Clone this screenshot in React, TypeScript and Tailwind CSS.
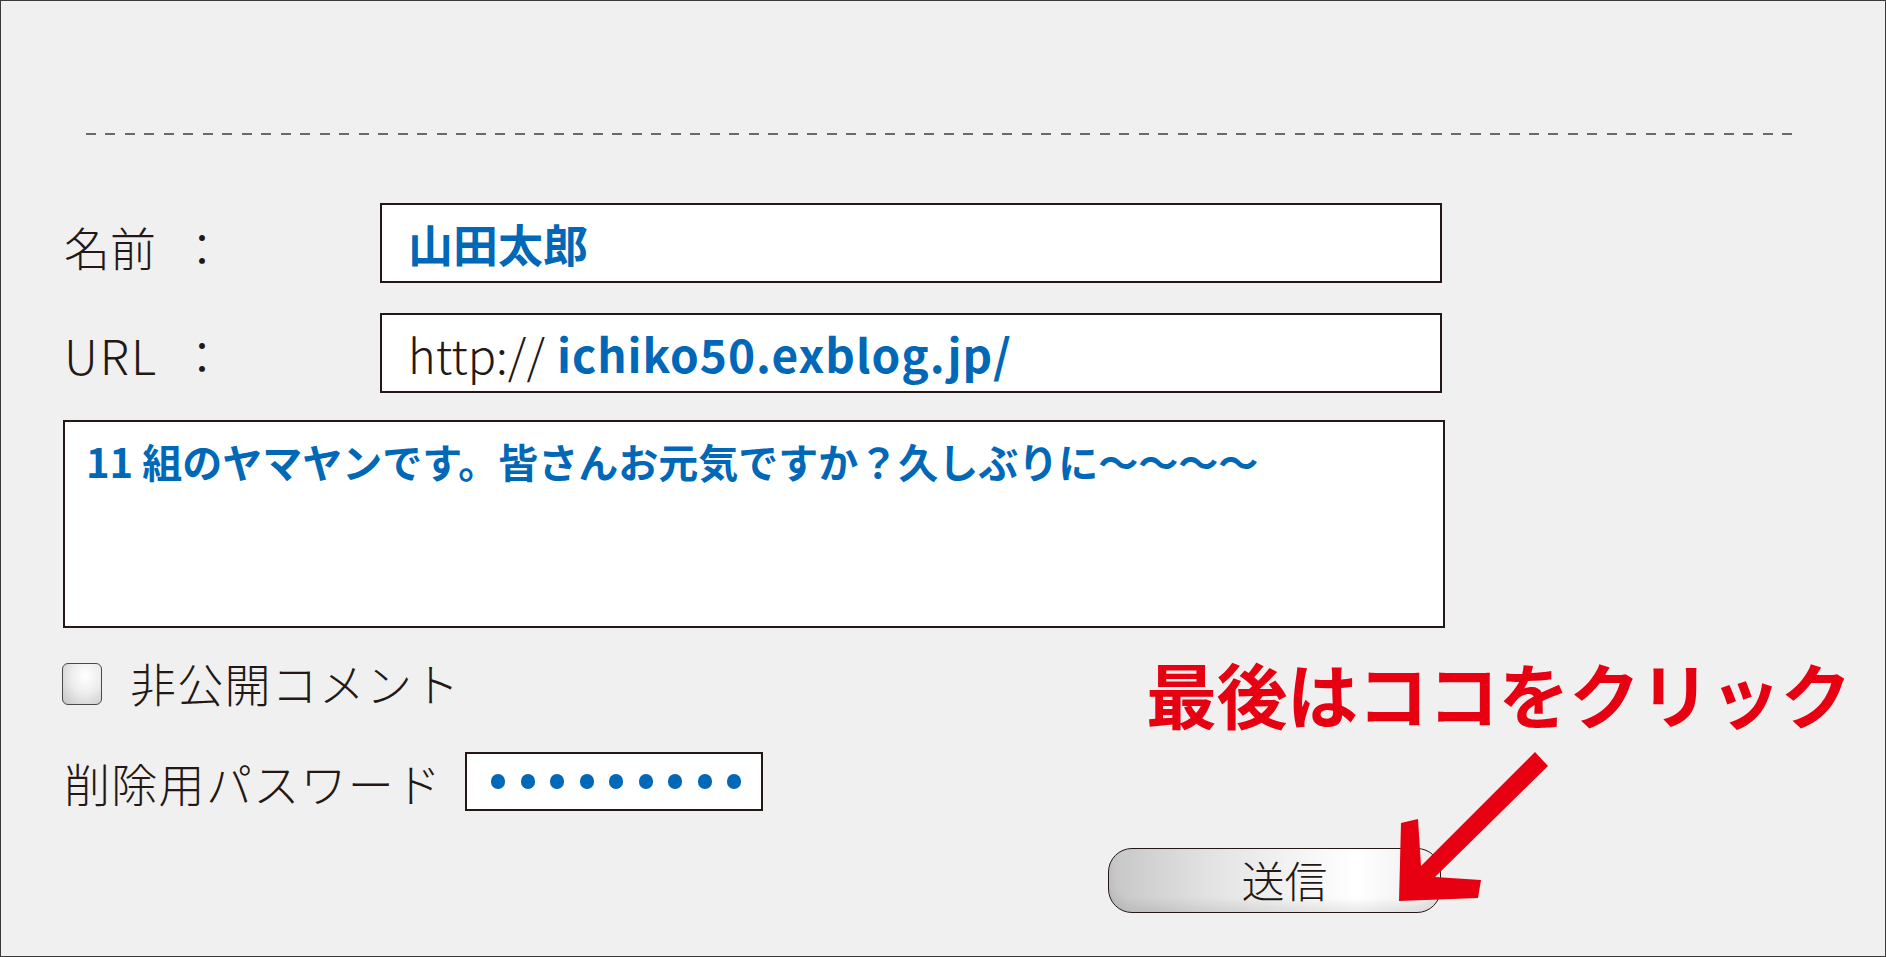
import React from "react";

export default function App() {
  const dots = [0, 1, 2, 3, 4, 5, 6, 7, 8];
  return (
    <div className="relative h-[957px] w-[1886px] overflow-hidden border border-[#3a3a3a] bg-[#f0f0f0] font-['Noto_Sans_CJK_JP','Noto_Sans',sans-serif] text-[#231815]">
      <div className="ml-[85px] mt-[132px] h-[2px] w-[1716px] bg-[repeating-linear-gradient(to_right,#6a6a6a_0px,#6a6a6a_10px,transparent_10px,transparent_19.5px)]" />

      {/* name row */}
      <div className="mt-[68px] flex items-center pl-[63px]">
        <span className="mt-[6px] w-[115px] text-[46px] font-light leading-none">名前</span>
        <span className="mt-[6px] w-[46px] text-center text-[46px] font-light leading-none">：</span>
        <div className="ml-[155px] flex h-[80px] w-[1062px] items-center border-2 border-[#231815] bg-white pl-[26px]">
          <span className="text-[45px] font-bold leading-none text-[#0068b7]">山田太郎</span>
        </div>
      </div>

      {/* url row */}
      <div className="mt-[30px] flex items-center pl-[63px]">
        <span className="mt-[2px] w-[115px] text-[48px] font-light leading-none tracking-[2px]">URL</span>
        <span className="mt-[2px] w-[46px] text-center text-[46px] font-light leading-none">：</span>
        <div className="ml-[155px] flex h-[80px] w-[1062px] items-center border-2 border-[#231815] bg-white pl-[26px]">
          <span className="text-[47px] font-light leading-none">http://</span>
          <span className="ml-[12px] text-[46px] font-bold leading-none tracking-[1px] text-[#0068b7]">ichiko50.exblog.jp/</span>
        </div>
      </div>

      {/* textarea */}
      <div className="ml-[62px] mt-[27px] h-[208px] w-[1382px] border-2 border-[#231815] bg-white pl-[21px] pt-[19px]">
        <p className="text-[40px] font-bold leading-none text-[#0068b7]">
          11 組のヤマヤンです。皆さんお元気ですか？久しぶりに〜〜〜〜
        </p>
      </div>

      {/* private comment */}
      <div className="mt-[35px] flex items-center pl-[61px]">
        <div className="h-[42px] w-[40px] rounded-[6px] border-[1.5px] border-[#4a4a4a] bg-[radial-gradient(ellipse_at_60%_30%,#ffffff_0%,#ededed_45%,#c4c4c4_100%)]" />
        <span className="-mt-[4px] ml-[28px] text-[46px] font-light leading-none tracking-[1.2px]">非公開コメント</span>
      </div>

      {/* password */}
      <div className="mt-[47px] flex items-center pl-[63px]">
        <span className="w-[401px] text-[46px] font-light leading-none tracking-[1.3px]">削除用パスワード</span>
        <div className="flex h-[59px] w-[298px] items-center gap-[15.5px] border-2 border-[#231815] bg-white pl-[24px]">
          {dots.map((d) => (
            <div key={d} className="h-[15px] w-[14px] rounded-full bg-[#0068b7]" />
          ))}
        </div>
      </div>

      {/* submit */}
      <div className="ml-[1107px] mt-[37px] flex h-[65px] w-[333px] items-center justify-center rounded-[24px] border-[1.5px] border-[#231815] bg-[linear-gradient(to_right,#c6c6c6_0%,#e2e2e2_30%,#f6f6f6_60%,#ffffff_75%,#ececec_100%)] pl-[20px] shadow-[inset_0_-8px_10px_rgba(0,0,0,0.08)]">
        <span className="-mt-[3px] text-[43px] font-light leading-none">送信</span>
      </div>

      {/* annotation */}
      <div className="absolute left-[1145px] top-[656px] whitespace-nowrap text-[71px] font-bold leading-none tracking-[-0.5px] text-[#e60012]">
        最後はココをクリック
      </div>
      <svg
        className="absolute left-[1390px] top-[745px] h-[165px] w-[165px]"
        viewBox="1390 745 165 165"
      >
        <polygon
          points="1400,822 1417,818 1420,865 1534,751 1547,765 1434,876 1480,879 1477,897 1398,900"
          fill="#e60012"
        />
      </svg>
    </div>
  );
}
